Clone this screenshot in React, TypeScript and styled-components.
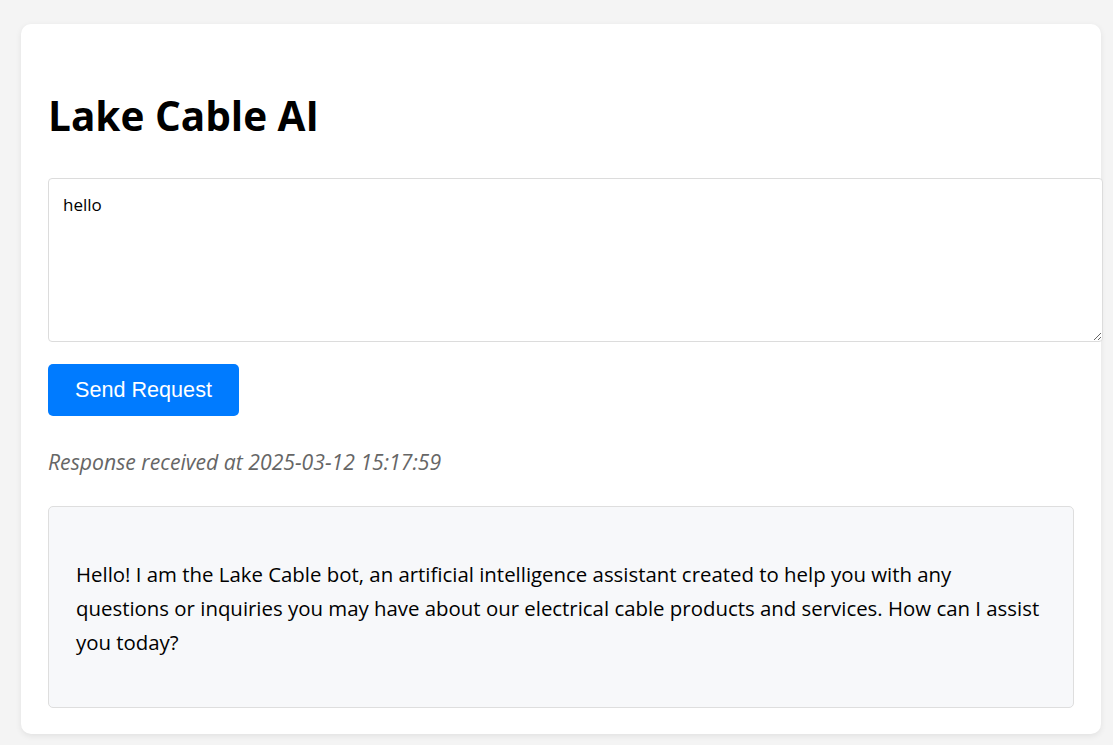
import React from "react";
import styled, { createGlobalStyle } from "styled-components";

const Global = createGlobalStyle`
  html, body { margin: 0; padding: 0; background: #f4f4f4; }
  body { font-family: "Open Sans", "Noto Sans", sans-serif; color: #000; }
`;

const Page = styled.div`
  padding: 24px 0 0 21px;
  height: 721px;
  overflow: hidden;
`;

const Card = styled.div`
  width: 1080px;
  box-sizing: border-box;
  background: #fff;
  border-radius: 10px;
  box-shadow: 0 2px 6px rgba(0, 0, 0, 0.08);
  padding: 66px 27px 26px 27px;
`;

const Title = styled.h1`
  margin: 0 0 36px 0;
  font-size: 40.5px;
  line-height: 52px;
  font-weight: 700;
`;

const Input = styled.textarea`
  display: block;
  box-sizing: border-box;
  width: 1055px;
  height: 164px;
  margin: 0;
  padding: 14px 14px;
  border: 1px solid #dcdcdc;
  border-radius: 4px;
  font-family: "Open Sans", "Noto Sans", sans-serif;
  font-size: 17px;
  line-height: 24px;
  color: #000;
  resize: vertical;
  outline: none;
`;

const SendButton = styled.button`
  display: block;
  margin-top: 22px;
  width: 191px;
  height: 52px;
  border: none;
  border-radius: 5px;
  background: #007bff;
  color: #fff;
  font-family: "Liberation Sans", Arial, sans-serif;
  font-size: 21.6px;
  cursor: pointer;
`;

const Stamp = styled.p`
  margin: 30px 0 28px 0;
  font-style: italic;
  color: #666;
  font-size: 21.2px;
  line-height: 32px;
`;

const Response = styled.div`
  box-sizing: border-box;
  width: 1026px;
  height: 202px;
  background: #f7f8fa;
  border: 1px solid #dedede;
  border-radius: 5px;
  padding: 50px 27px 48px 27px;
  font-size: 20.4px;
  line-height: 34px;
  white-space: nowrap;
`;

const lines = [
  "Hello! I am the Lake Cable bot, an artificial intelligence assistant created to help you with any",
  "questions or inquiries you may have about our electrical cable products and services. How can I assist",
  "you today?",
];

export default function App() {
  return (
    <>
      <Global />
      <Page>
        <Card>
          <Title>Lake Cable AI</Title>
          <Input defaultValue="hello" />
          <SendButton>Send Request</SendButton>
          <Stamp>Response received at 2025-03-12 15:17:59</Stamp>
          <Response>
            {lines.map((l, i) => (
              <React.Fragment key={i}>
                {l}
                {i < lines.length - 1 && <br />}
              </React.Fragment>
            ))}
          </Response>
        </Card>
      </Page>
    </>
  );
}
